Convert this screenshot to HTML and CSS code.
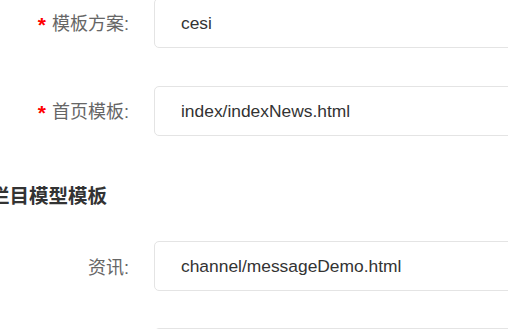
FILE: index.html
```html
<!DOCTYPE html>
<html lang="zh">
<head>
<meta charset="utf-8">
<title>模板设置</title>
<link rel="stylesheet" href="styles.css">
</head>
<body>
<div class="page">
  <div class="row">
    <label class="label"><span class="req">*</span>模板方案:</label>
    <div class="input">cesi</div>
  </div>
  <div class="row">
    <label class="label"><span class="req">*</span>首页模板:</label>
    <div class="input">index/indexNews.html</div>
  </div>
  <h3 class="section">栏目模型模板</h3>
  <div class="row tight">
    <label class="label">资讯:</label>
    <div class="input">channel/messageDemo.html</div>
  </div>
  <div class="row">
    <label class="label"></label>
    <div class="input"></div>
  </div>
</div>
</body>
</html>
```

FILE: styles.css
```css
html, body {
  margin: 0;
  padding: 0;
  background: #fff;
  overflow: hidden;
}
body {
  width: 508px;
  height: 329px;
  font-family: "Liberation Sans", "Noto Sans CJK SC", sans-serif;
}
.page {
  margin-left: -10px;
  margin-top: -2px;
}
.row {
  display: flex;
  align-items: center;
  margin-bottom: 38px;
}
.row.tight {
  margin-bottom: 37px;
}
.label {
  width: 164px;
  box-sizing: border-box;
  padding-right: 25px;
  text-align: right;
  font-size: 18px;
  color: #666;
  flex: none;
}
.req {
  color: #f00;
  margin-right: 6px;
  font-size: 21px;
  font-weight: bold;
  vertical-align: -2px;
}
.input {
  width: 420px;
  height: 50px;
  box-sizing: border-box;
  border: 1px solid #e4e4e4;
  border-radius: 5px;
  padding-left: 26px;
  display: flex;
  align-items: center;
  font-size: 17.4px;
  color: #333;
  flex: none;
}
.section {
  margin: 0 0 32px 0;
  padding-top: 7px;
  font-size: 19.5px;
  line-height: 28px;
  font-weight: bold;
  color: #333;
  font-family: "Noto Sans CJK SC", sans-serif;
}
```
